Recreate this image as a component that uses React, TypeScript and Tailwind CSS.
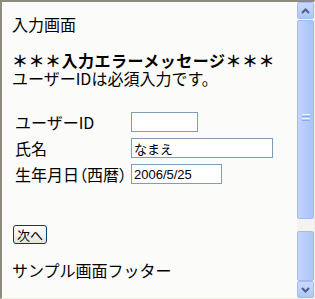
import React from "react";

const jp = '"Noto Sans CJK JP", "Noto Sans", sans-serif';

function Chevron({ up }: { up?: boolean }) {
  return (
    <svg width="9" height="6" viewBox="0 0 9 6" className="block">
      <path
        d={up ? "M1 5 L4.5 1.5 L8 5" : "M1 1 L4.5 4.5 L8 1"}
        fill="none"
        stroke="#4d6185"
        strokeWidth="2"
      />
    </svg>
  );
}

function ScrollButton({ up }: { up?: boolean }) {
  return (
    <div className="h-[17px] w-[17px] flex items-center justify-center rounded-[2px] border border-[#a6bdf2] bg-gradient-to-b from-[#cadafd] to-[#adc5f8]">
      <Chevron up={up} />
    </div>
  );
}

function Scrollbar() {
  return (
    <div className="w-[17px] h-full flex flex-col bg-[#f4f3ee]">
      <ScrollButton up />
      <div className="mt-[1px] h-[199px] rounded-[2px] border border-[#a3baf0] bg-gradient-to-r from-[#c3d5fd] via-[#b6cbfb] to-[#a9c2f7] flex items-center justify-center">
        <div className="flex flex-col gap-[1px] mt-[-4px]">
          <div className="w-[8px] h-[1px] bg-[#eef3ff]" />
          <div className="w-[8px] h-[1px] bg-[#8cabf1]" />
          <div className="w-[8px] h-[1px] bg-[#eef3ff]" />
          <div className="w-[8px] h-[1px] bg-[#8cabf1]" />
        </div>
      </div>
      <div className="h-[12px]" />
      <div className="flex-1 rounded-[2px] border border-[#a3baf0] bg-gradient-to-r from-[#c3d5fd] to-[#adc5f8]" />
      <ScrollButton />
    </div>
  );
}

export default function App() {
  return (
    <div
      className="w-[315px] h-[299px] bg-[#fbfbf9] border-t-2 border-l-2 border-t-[#8d8b80] border-l-[#8d8b80] border-b border-b-[#f1efe2] border-r border-r-[#f1efe2] flex overflow-hidden text-black"
      style={{ fontFamily: jp }}
    >
      <div className="flex-1 pl-[10px] text-[16px] leading-[18px]">
        <p className="mt-[13px]">入力画面</p>
        <p className="mt-[18px] font-bold tracking-[0.5px]">＊＊＊入力エラーメッセージ＊＊＊</p>
        <p className="mt-[1px] leading-[17px]">ユーザーIDは必須入力です。</p>
        <div className="mt-[22px] ml-[3px] grid grid-cols-[116px_auto] auto-rows-[26px] items-center">
          <span>ユーザーID</span>
          <input
            className="w-[67px] h-[20px] border border-[#7f9db9] bg-white px-[2px] text-[13px] outline-none"
            defaultValue=""
          />
          <span>氏名</span>
          <input
            className="w-[142px] h-[20px] border border-[#7f9db9] bg-white px-[2px] text-[13px] outline-none"
            defaultValue="なまえ"
          />
          <span className="whitespace-nowrap [font-feature-settings:'palt']">生年月日（西暦）</span>
          <input
            className="w-[91px] h-[20px] border border-[#7f9db9] bg-white px-[2px] text-[13px] outline-none"
            style={{ fontFamily: '"Liberation Sans", "Noto Sans CJK JP", sans-serif' }}
            defaultValue="2006/5/25"
          />
        </div>
        <button className="mt-[38px] ml-[1px] w-[34px] h-[19px] rounded-[3px] border border-[#003c74] bg-gradient-to-b from-white to-[#e6e3d6] text-[13px] leading-[15px] flex items-center justify-center">
          次へ
        </button>
        <p className="mt-[17px]">サンプル画面フッター</p>
      </div>
      <Scrollbar />
    </div>
  );
}
